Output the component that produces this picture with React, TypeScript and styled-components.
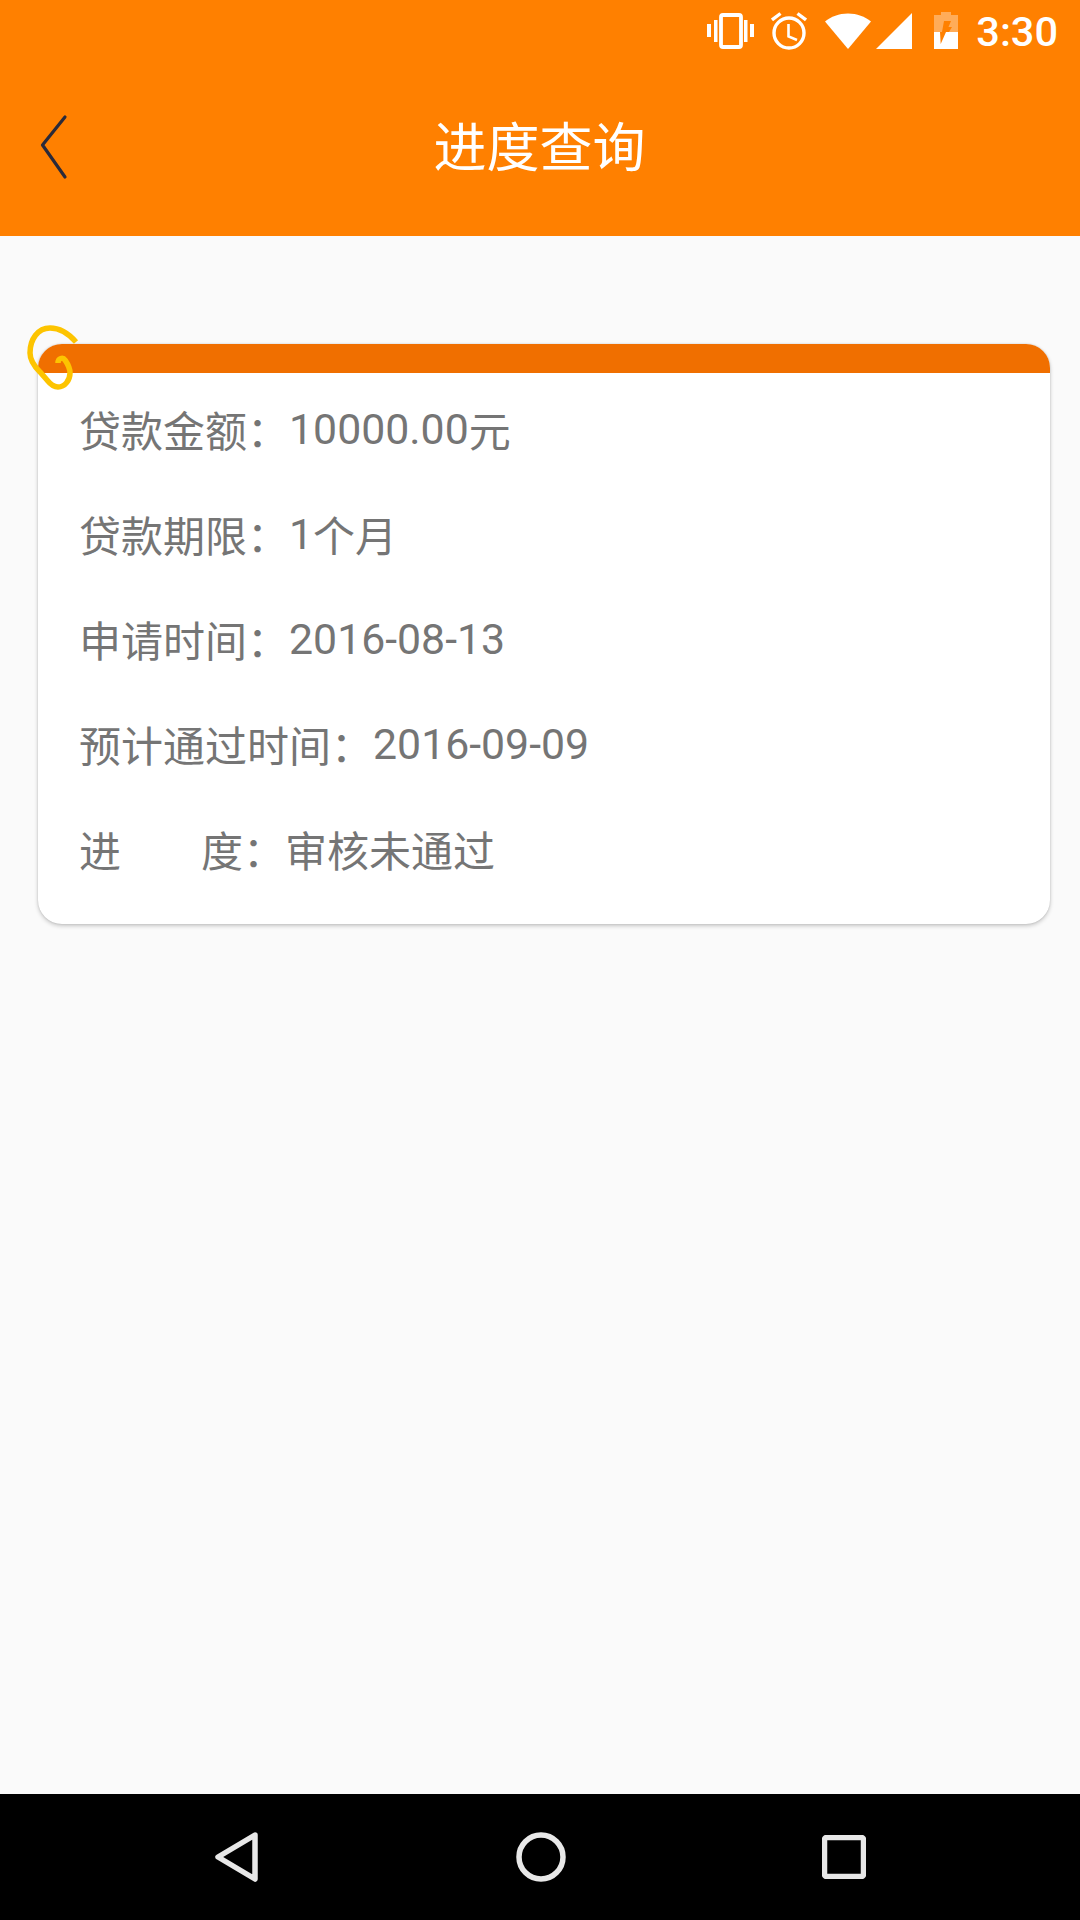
import { createGlobalStyle } from "styled-components";
import styled from "styled-components";

const rows = [
    { label: "贷款金额", number: "10000.00", unit: "元" },
    { label: "贷款期限", number: "1", unit: "个月" },
    { label: "申请时间", number: "2016-08-13", unit: "" },
    { label: "预计通过时间", number: "2016-09-09", unit: "" },
];

const GlobalStyle = createGlobalStyle`
    html, body {
        margin: 0;
        padding: 0;
    }
    body {
        font-family: Roboto, "Noto Sans CJK SC", sans-serif;
    }
`;

const App = () => {
    return (
        <Screen>
            <GlobalStyle />
            <AppBar>
                <StatusBar>
                    <StatusIcon width="47" height="36" viewBox="0 0 47 36">
                        <rect x="0" y="11" width="4" height="13" />
                        <rect x="7" y="7" width="3.500" height="22" />
                        <rect x="37" y="7" width="3.500" height="22" />
                        <rect x="43" y="11" width="4" height="13" />
                        <rect x="14" y="2" width="20" height="32" rx="2" fill="none" stroke="#fff" strokeWidth="3.800" />
                    </StatusIcon>
                    <StatusIcon $left={17} width="36" height="38" viewBox="0 0 36 38">
                        <circle cx="18" cy="21" r="15" fill="none" stroke="#fff" strokeWidth="3.400" />
                        <path d="M17.500 12v12.500l8.500 3.500" fill="none" stroke="#fff" strokeWidth="2.600" />
                        <path d="M1 8 9.500 1.500M35 8 26.500 1.500" fill="none" stroke="#fff" strokeWidth="3.400" />
                    </StatusIcon>
                    <StatusIcon $left={18} width="46" height="36" viewBox="0 0 46 36">
                        <path d="M0 8.500C6 3.500 14 0.500 23 0.500S40 3.500 46 8.500L23 36Z" />
                    </StatusIcon>
                    <StatusIcon $left={5} width="36" height="36" viewBox="0 0 36 36">
                        <path d="M36 0V36H0Z" />
                    </StatusIcon>
                    <StatusIcon $left={22} width="24" height="38" viewBox="0 0 24 38">
                        <path fillRule="evenodd" d="M7 0h10v3h7v17H0V3h7ZM8 20 10 9h7l-2.500 6H18l-3 5Z" opacity="0.35" />
                        <path d="M0 20h6L6.700 32 12 20h12v17H0Z" />
                    </StatusIcon>
                    <Clock>3:30</Clock>
                </StatusBar>
                <TitleRow>
                    <BackIcon width="28" height="66" viewBox="0 0 28 66">
                        <path d="M25 3 2.500 31 25 63" fill="none" stroke="#2a2a3a" strokeWidth="3.200" strokeLinecap="round" strokeLinejoin="round" />
                    </BackIcon>
                    <Title>进度查询</Title>
                </TitleRow>
            </AppBar>
            <Content>
                <Card>
                    <CardHeader />
                    <Clip width="54" height="66" viewBox="0 0 54 66">
                        <path d="M49 17C42 9 34 3 23 3 11 3 3 14 3 28 3 36 8 42 13 47L20 55C24 60 28 62 31 62 38 62 43 55 43 48 43 42 40 38 38 35 36 32 31 33 31 38" fill="none" stroke="#fdc400" strokeWidth="5.500" />
                    </Clip>
                    <CardBody>
                        {rows.map((row) => (
                            <Row key={row.label}>
                                {row.label}：<Digits>{row.number}</Digits>{row.unit}
                            </Row>
                        ))}
                        <Row>
                            进<ProgressGap />度：审核未通过
                        </Row>
                    </CardBody>
                </Card>
            </Content>
            <NavBar>
                <NavIcon width="44" height="50" viewBox="0 0 44 50">
                    <path d="M40 3 3 25 40 47Z" fill="none" stroke="#e8e8e8" strokeWidth="5.500" strokeLinejoin="round" />
                </NavIcon>
                <NavIcon width="50" height="50" viewBox="0 0 50 50">
                    <circle cx="25" cy="25" r="22" fill="none" stroke="#e8e8e8" strokeWidth="5.500" />
                </NavIcon>
                <NavIcon width="44" height="44" viewBox="0 0 44 44">
                    <rect x="2.500" y="2.500" width="39" height="39" rx="2" fill="none" stroke="#e8e8e8" strokeWidth="5.500" />
                </NavIcon>
            </NavBar>
        </Screen>
    );
};

const Screen = styled.div`
    width: 1080px;
    height: 1920px;
    display: flex;
    flex-direction: column;
    background: #fafafa;
    overflow: hidden;
`;

const AppBar = styled.header`
    height: 236px;
    flex-shrink: 0;
    background: #ff8000;
`;

const StatusBar = styled.div`
    height: 72px;
    display: flex;
    align-items: center;
    justify-content: flex-end;
    padding: 0 22px 10px 0;
    box-sizing: border-box;
`;

const StatusIcon = styled.svg<{ $left?: number }>`
    display: block;
    fill: #fff;
    margin-left: ${({ $left }) => $left || 0}px;
`;

const Clock = styled.span`
    margin-left: 18px;
    padding-top: 1px;
    color: #fff;
    font-size: 41.500px;
    font-weight: 500;
`;

const TitleRow = styled.div`
    position: relative;
    height: 144px;
    display: flex;
    align-items: center;
    justify-content: center;
`;

const BackIcon = styled.svg`
    position: absolute;
    left: 40px;
    top: 42px;
`;

const Title = styled.h1`
    margin: 0;
    color: #fff;
    font-size: 53px;
    font-weight: 400;
    padding-right: 1px;
`;

const Content = styled.main`
    flex: 1;
    padding: 108px 30px 0 38px;
`;

const Card = styled.section`
    position: relative;
    height: 580px;
    border-radius: 24px;
    background: #fff;
    box-shadow: 0 2px 4px rgba(0, 0, 0, 0.2), 0 0 2px rgba(0, 0, 0, 0.16);
`;

const Clip = styled.svg`
    position: absolute;
    left: -11px;
    top: -19px;
`;

const CardHeader = styled.div`
    height: 29px;
    border-radius: 24px 24px 0 0;
    background: #f06f00;
`;

const CardBody = styled.div`
    display: flex;
    flex-direction: column;
    padding: 3px 0 0 41px;
`;

const Row = styled.div`
    height: 105px;
    display: flex;
    align-items: center;
    color: #757575;
    font-size: 42px;
    white-space: pre;
`;

const Digits = styled.span`
    font-size: 42.800px;
`;

const ProgressGap = styled.span`
    width: 80px;
`;

const NavBar = styled.nav`
    height: 126px;
    flex-shrink: 0;
    background: #000;
    display: flex;
    align-items: center;
    justify-content: space-between;
    padding: 0 214px 0 215px;
`;

const NavIcon = styled.svg`
    display: block;
`;

export default App;
